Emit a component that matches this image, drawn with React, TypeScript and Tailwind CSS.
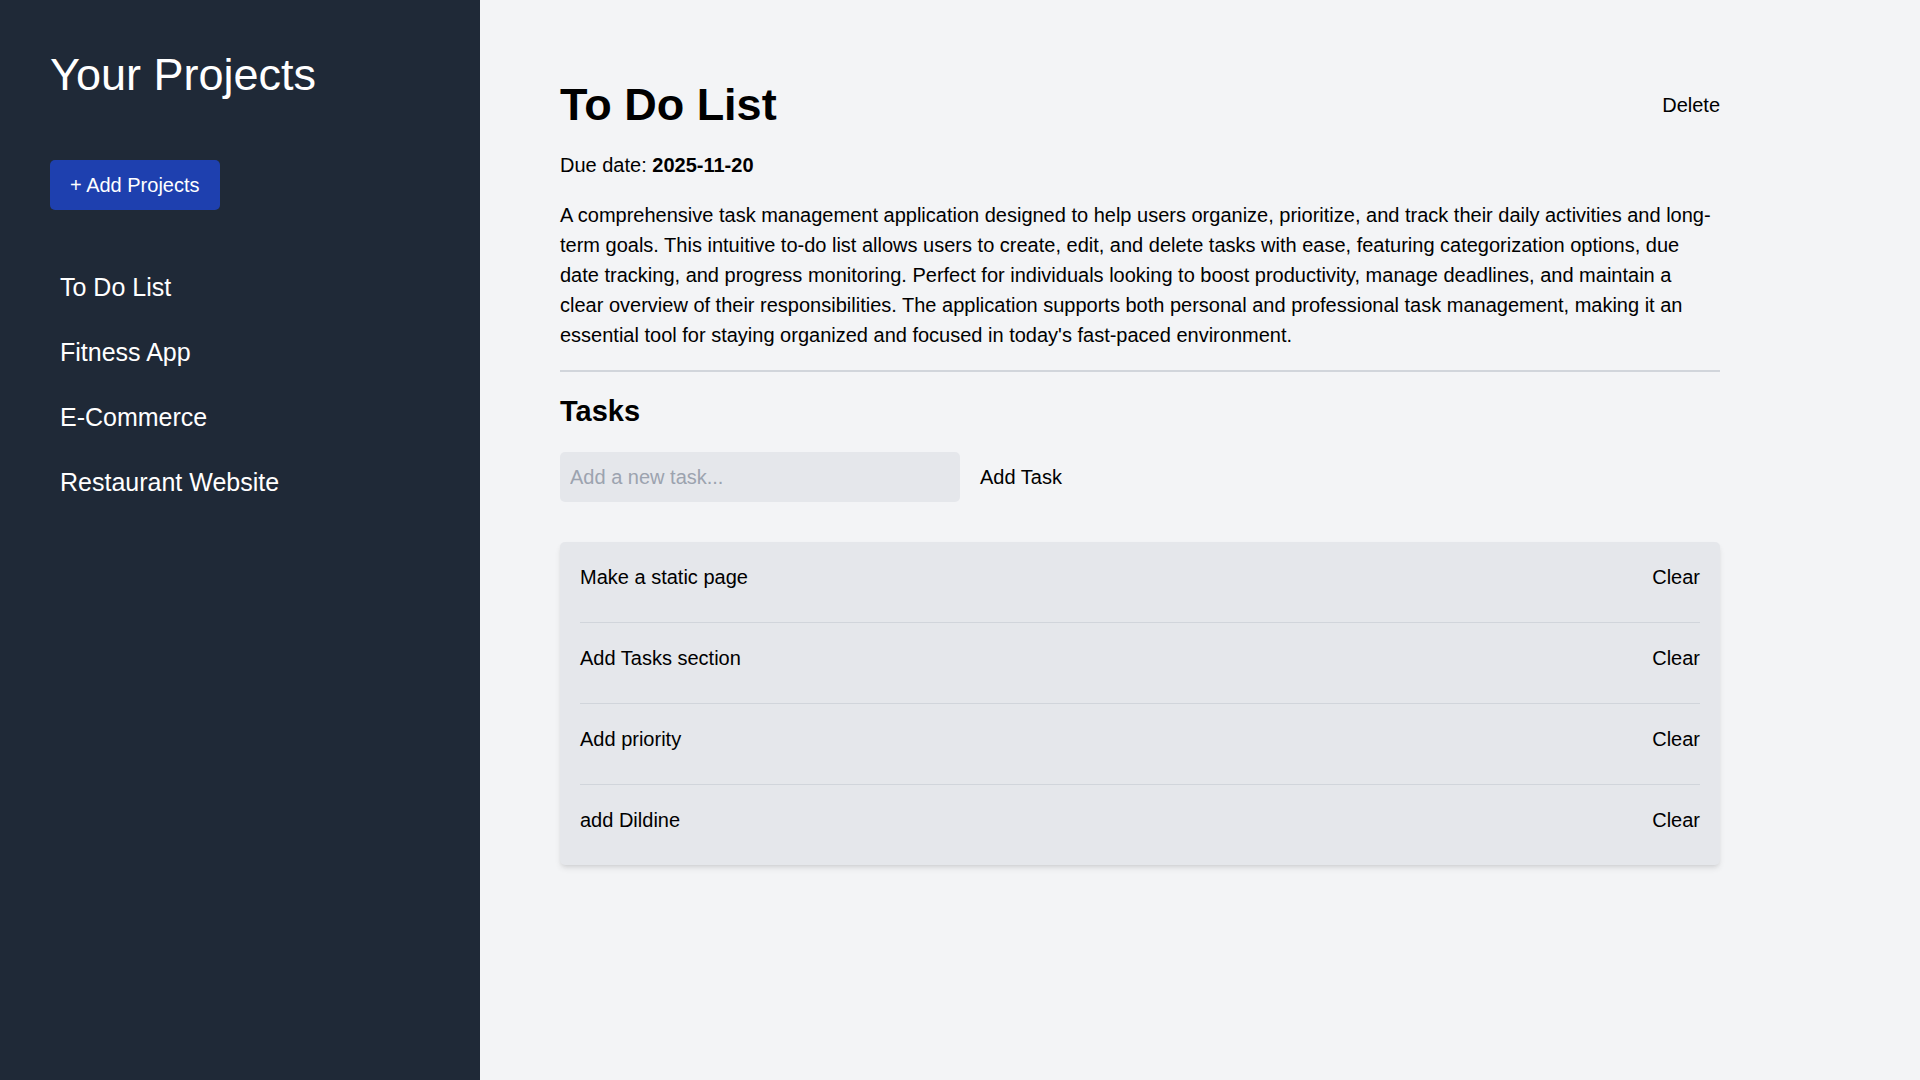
import { useState } from "react";

const projects = ["To Do List", "Fitness App", "E-Commerce", "Restaurant Website"];

const initialTasks = [
  "Make a static page",
  "Add Tasks section",
  "Add priority",
  "add Dildine",
];

function Sidebar() {
  return (
    <aside className="w-[480px] shrink-0 bg-[#1f2937] px-[50px] pt-[50px] text-white">
      <h2 className="text-[45px] leading-[50px]">Your Projects</h2>
      <button className="mt-[60px] rounded-[5px] bg-[#1e40af] px-[20px] py-[10px] text-[20px] leading-[30px] text-white">
        + Add Projects
      </button>
      <ul className="mt-[50px] space-y-[10px]">
        {projects.map((name) => (
          <li key={name}>
            <button className="w-full px-[10px] py-[10px] text-left text-[25px] leading-[35px] text-white">
              {name}
            </button>
          </li>
        ))}
      </ul>
    </aside>
  );
}

function TaskList() {
  const [tasks, setTasks] = useState(initialTasks);
  const [draft, setDraft] = useState("");

  return (
    <section>
      <h2 className="mt-[22px] text-[29px] font-bold leading-[35px] text-black">Tasks</h2>
      <div className="mt-[23px] flex items-center">
        <input
          value={draft}
          onChange={(e) => setDraft(e.target.value)}
          placeholder="Add a new task..."
          className="h-[50px] w-[400px] rounded-[5px] bg-[#e5e7eb] px-[10px] text-[20px] leading-[30px] text-black outline-none placeholder:text-[#9ca3af]"
        />
        <button
          onClick={() => {
            if (!draft.trim()) return;
            setTasks([...tasks, draft.trim()]);
            setDraft("");
          }}
          className="ml-[20px] text-[20px] leading-[30px] text-black"
        >
          Add Task
        </button>
      </div>
      <ul className="mt-[40px] rounded-[5px] bg-[#e5e7eb] px-[20px] shadow-md">
        {tasks.map((task, i) => (
          <li
            key={task + i}
            className="flex justify-between border-b border-[#d1d5db] pt-[20px] pb-[30px] text-[20px] leading-[30px] text-black last:border-b-0"
          >
            <span>{task}</span>
            <button onClick={() => setTasks(tasks.filter((_, j) => j !== i))}>Clear</button>
          </li>
        ))}
      </ul>
    </section>
  );
}

export default function App() {
  return (
    <div className="flex min-h-screen font-['Liberation_Sans',Arial,sans-serif]">
      <Sidebar />
      <main className="flex-1 bg-[#f3f4f6] pt-[80px] pl-[80px]">
        <div className="w-[1160px]">
          <header className="border-b-2 border-[#d1d5db] pb-[20px]">
            <div className="flex items-center justify-between">
              <h1 className="text-[45px] font-bold leading-[50px] text-black">To Do List</h1>
              <button className="text-[20px] leading-[30px] text-black">Delete</button>
            </div>
            <p className="mt-[20px] text-[20px] leading-[30px] text-black">
              Due date: <span className="font-bold">2025-11-20</span>
            </p>
            <p className="mt-[20px] text-[20px] leading-[30px] text-black">
              A comprehensive task management application designed to help users organize, prioritize, and track their daily activities and long-term goals. This intuitive to-do list allows users to create, edit, and delete tasks with ease, featuring categorization options, due date tracking, and progress monitoring. Perfect for individuals looking to boost productivity, manage deadlines, and maintain a clear overview of their responsibilities. The application supports both personal and professional task management, making it an essential tool for staying organized and focused in today's fast-paced environment.
            </p>
          </header>
          <TaskList />
        </div>
      </main>
    </div>
  );
}
